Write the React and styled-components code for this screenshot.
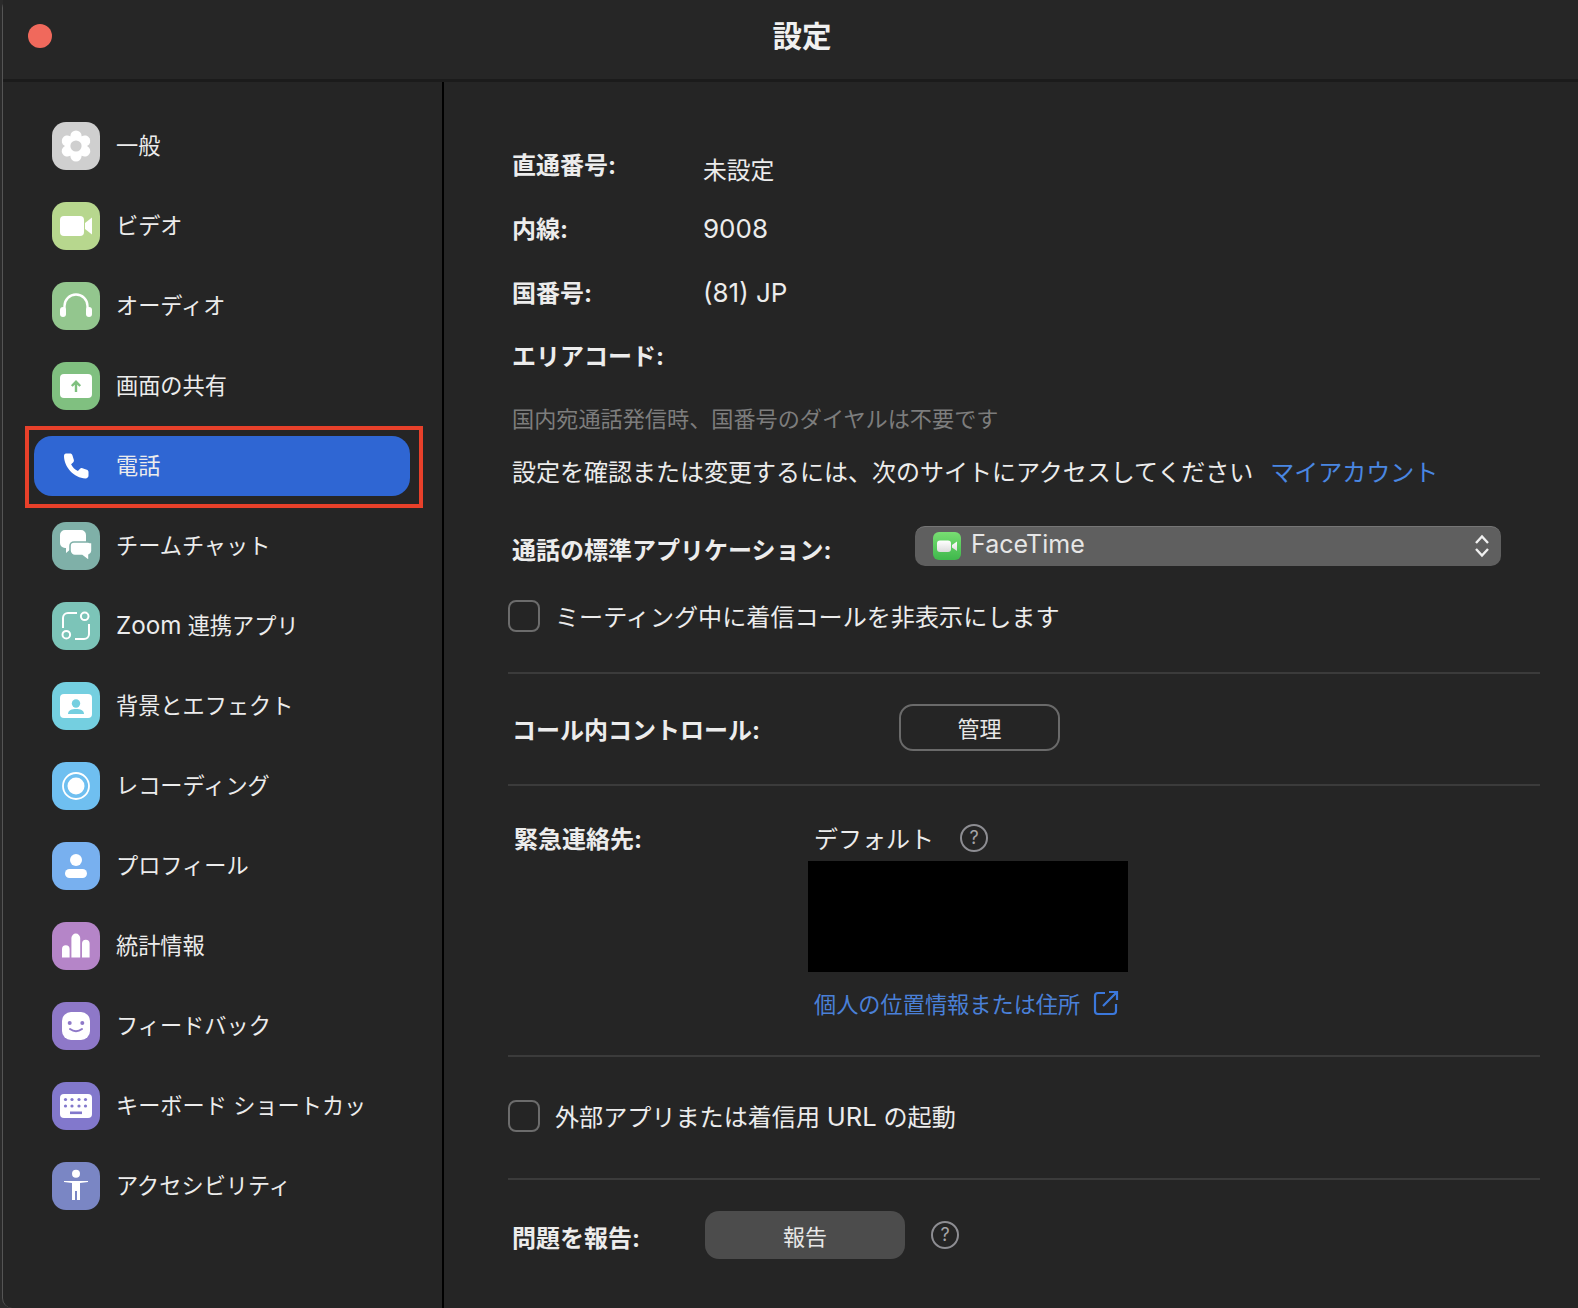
import React from "react";
import styled, { createGlobalStyle } from "styled-components";

const GlobalStyle = createGlobalStyle`
  html, body {
    margin: 0;
    padding: 0;
    background: #2b2b2b;
  }
  body {
    font-family: Inter, "Noto Sans CJK JP", "Liberation Sans", sans-serif;
    color: #ececec;
  }
`;

const Frame = styled.div`
  width: 1578px;
  height: 1308px;
  padding-left: 2px;
  box-sizing: border-box;
  overflow: hidden;
`;

const Win = styled.div`
  height: 100%;
  background: #252525;
  border-left: 1px solid #555555;
  border-radius: 8px 0 0 10px;
  display: flex;
  flex-direction: column;
`;

const TitleBar = styled.div`
  height: 79px;
  flex: none;
  display: flex;
  align-items: center;
  justify-content: center;
  position: relative;
  background: #262626;
  border-bottom: 3px solid #1b1b1b;
`;

const CloseDot = styled.div`
  position: absolute;
  left: 25px;
  top: 24px;
  width: 24px;
  height: 24px;
  border-radius: 50%;
  background: #f0695c;
`;

const Title = styled.div`
  font-size: 29.5px;
  font-weight: 700;
  line-height: 1;
  margin-left: 23px;
  margin-top: -5px;
  color: #f0f0f0;
`;

const Body = styled.div`
  flex: 1;
  display: flex;
  min-height: 0;
`;

const Sidebar = styled.nav`
  width: 441px;
  flex: none;
  padding-top: 24px;
  box-sizing: border-box;
  border-right: 2px solid #000000;
`;

const NavItem = styled.div`
  height: 80px;
  padding-left: 49px;
  display: flex;
  align-items: center;
  gap: 16px;
  font-size: 22.2px;
  color: #ececec;
  position: relative;
  width: 365px;
  white-space: nowrap;
  overflow: ${(p) => (p.$active ? "visible" : "hidden")};
`;

const ActivePill = styled.div`
  position: absolute;
  left: 31px;
  top: 10px;
  width: 376px;
  height: 60px;
  border-radius: 18px;
  background: #2f66d3;
`;

const RedMark = styled.div`
  position: absolute;
  left: 22px;
  top: 0;
  width: 398px;
  height: 82px;
  box-sizing: border-box;
  border: 4px solid #e8402a;
`;

const NavIconBox = styled.div`
  width: 48px;
  height: 48px;
  flex: none;
  border-radius: 14px;
  background: ${(p) => p.$color};
  position: relative;
  svg {
    display: block;
  }
`;

const NavText = styled.span`
  position: relative;
  line-height: 1;
`;

const Latin = styled.span`
  font-size: ${(p) => p.$scale || 1.09}em;
`;

const Main = styled.main`
  flex: 1;
  padding: 50.5px 38px 0 64px;
  min-width: 0;
`;

const Rows = styled.div`
  padding-left: 4px;
`;

const InfoRow = styled.div`
  height: 63.5px;
  display: flex;
  align-items: center;
`;

const Label = styled.div`
  font-size: 24px;
  font-weight: 700;
  width: ${(p) => p.$width || 191}px;
  flex: none;
  white-space: nowrap;
  padding-top: ${(p) => p.$down || 0}px;
  padding-bottom: ${(p) => p.$up || 0}px;
  box-sizing: content-box;
`;

const Value = styled.div`
  font-size: ${(p) => p.$size || 23.8}px;
  padding-top: ${(p) => p.$down || 0}px;
`;

const Note = styled.div`
  font-size: 22.15px;
  line-height: 40px;
  color: #7d7d7d;
  margin-top: 12.5px;
  white-space: nowrap;
`;

const SiteLine = styled.div`
  font-size: 24px;
  line-height: 40px;
  margin-top: 14px;
  white-space: nowrap;
  display: flex;
  gap: 17px;
`;

const BlueLink = styled.span`
  color: #4a87e2;
`;

const AppRow = styled.div`
  display: flex;
  align-items: flex-start;
  margin-top: 32.5px;
  padding-left: 4px;
`;

const SelectBox = styled.div`
  width: 586px;
  height: 40px;
  border-radius: 10px;
  background: #5f5f5f;
  border-top: 1px solid #767676;
  box-sizing: border-box;
  display: flex;
  align-items: center;
  padding: 0 11px 0 18px;
`;

const SelectText = styled.span`
  font-size: 25px;
  margin-left: 10px;
  margin-top: -4px;
  flex: 1;
  color: #e6e6e6;
`;

const CheckRow = styled.label`
  display: flex;
  align-items: center;
  gap: 15px;
  font-size: 24.1px;
  margin-top: ${(p) => p.$top}px;
  height: 32px;
  white-space: nowrap;
`;

const CheckBox = styled.span`
  width: 32px;
  height: 32px;
  flex: none;
  box-sizing: border-box;
  border: 2px solid #6c6c6c;
  border-radius: 8px;
`;

const Rule = styled.div`
  height: 2px;
  background: #3b3b3b;
  margin-top: ${(p) => p.$top}px;
`;

const ControlRow = styled.div`
  display: flex;
  align-items: flex-start;
  margin-top: ${(p) => p.$top}px;
  padding-left: 4px;
`;

const OutlineBtn = styled.button`
  width: 161px;
  height: 47px;
  box-sizing: border-box;
  border: 2px solid #6a6a6a;
  border-radius: 14px;
  background: transparent;
  color: #e8e8e8;
  font-family: inherit;
  font-size: 22px;
  padding: 0;
`;

const FilledBtn = styled.button`
  width: 200px;
  height: 48px;
  border: 0;
  border-radius: 14px;
  background: #4c4c4c;
  color: #e8e8e8;
  font-family: inherit;
  font-size: 22px;
  padding: 0;
`;

const EmergencyRow = styled.div`
  display: flex;
  margin-top: 32px;
  padding-left: 6px;
`;

const EmergencyCol = styled.div`
  display: flex;
  flex-direction: column;
`;

const DefaultLine = styled.div`
  height: 43px;
  box-sizing: border-box;
  padding: 0 0 4px 6px;
  display: flex;
  align-items: center;
  font-size: 24px;
`;

const Blackout = styled.div`
  width: 320px;
  height: 111px;
  background: #000000;
`;

const LinkLine = styled.div`
  display: flex;
  align-items: center;
  gap: 13px;
  padding-left: 6px;
  margin-top: 14px;
  height: 34px;
  font-size: 22.2px;
  color: #4a80d8;
`;

const HelpMark = styled.span`
  width: 28px;
  height: 28px;
  flex: none;
  box-sizing: border-box;
  border: 2px solid #8d8d92;
  border-radius: 50%;
  color: #a4a4a8;
  font-size: 18px;
  line-height: 1;
  display: inline-flex;
  align-items: center;
  justify-content: center;
  margin-left: ${(p) => p.$left}px;
  margin-top: ${(p) => p.$up || 0}px;
`;

const W = "#ffffff";

const GearIcon = () => (
  <svg width="48" height="48" viewBox="0 0 48 48">
    {[0, 60, 120, 180, 240, 300].map((a) => (
      <circle key={a} cx="24" cy="14" r="5.6" fill={W} transform={`rotate(${a} 24 24)`} />
    ))}
    <circle cx="24" cy="24" r="11" fill={W} />
    <circle cx="24" cy="24" r="5.6" fill="#cfcfcf" />
  </svg>
);

const VideoIcon = () => (
  <svg width="48" height="48" viewBox="0 0 48 48">
    <rect x="8" y="14" width="24" height="20" rx="4" fill={W} />
    <path d="M33 21 L40 15.5 V32.5 L33 27 Z" fill={W} />
  </svg>
);

const AudioIcon = () => (
  <svg width="48" height="48" viewBox="0 0 48 48">
    <path d="M12.5 30 V24 a11.5 11.5 0 0 1 23 0 V30" fill="none" stroke={W} strokeWidth="2.4" />
    <rect x="8" y="25" width="6" height="10" rx="3" fill={W} />
    <rect x="34" y="25" width="6" height="10" rx="3" fill={W} />
  </svg>
);

const ShareIcon = () => (
  <svg width="48" height="48" viewBox="0 0 48 48">
    <rect x="8" y="12" width="32" height="24" rx="4" fill={W} />
    <path d="M24 30 V20 M19.8 24 L24 19.8 L28.2 24" fill="none" stroke="#7fc07f" strokeWidth="2.4" />
  </svg>
);

const PhoneIcon = () => (
  <svg width="48" height="48" viewBox="0 0 48 48">
    <path
      d="M14 11.5 h4 c1.2 0 2 .6 2.4 1.8 l1.4 4.5 c.3 1 .1 1.9 -.7 2.6 l-2 1.8 c1.3 3 3.7 5.3 6.8 6.7 l1.9 -2 c.7 -.7 1.6 -1 2.6 -.7 l4.4 1.5 c1.1 .4 1.7 1.2 1.7 2.4 v3.5 c0 1.6 -1.2 2.9 -3 2.9 C22 36 12 25 12 14 c0 -1.5 .8 -2.5 2 -2.5 Z"
      fill={W}
    />
  </svg>
);

const ChatIcon = () => (
  <svg width="48" height="48" viewBox="0 0 48 48">
    <path d="M13 8 H29 a5 5 0 0 1 5 5 V21 a5 5 0 0 1 -5 5 H20 L14 31 V26 H13 a5 5 0 0 1 -5 -5 V13 a5 5 0 0 1 5 -5 Z" fill={W} />
    <path d="M22 20 H35 V19 Q38 22 40 19 V29 a5 5 0 0 1 -3 4 V39 L30 33.5 H23 a5 5 0 0 1 -5 -5 V24 a4 4 0 0 1 4 -4 Z" fill={W} stroke="#7fb0a8" strokeWidth="1.6" />
  </svg>
);

const AppsIcon = () => (
  <svg width="48" height="48" viewBox="0 0 48 48" fill="none" stroke={W} strokeWidth="2">
    <path d="M11 26 V16 a5 5 0 0 1 5 -5 H25" />
    <path d="M37 22 V32 a5 5 0 0 1 -5 5 H23" />
    <circle cx="32.7" cy="14.3" r="3.8" />
    <circle cx="14.3" cy="32.7" r="3.8" />
  </svg>
);

const BackgroundIcon = () => (
  <svg width="48" height="48" viewBox="0 0 48 48">
    <rect x="8" y="12" width="32" height="24" rx="4" fill={W} />
    <circle cx="24" cy="21.5" r="4.2" fill="#74cfe0" />
    <path d="M16 32 C16 28 20 27 24 27 C28 27 32 28 32 32 Z" fill="#74cfe0" />
  </svg>
);

const RecordIcon = () => (
  <svg width="48" height="48" viewBox="0 0 48 48">
    <circle cx="24" cy="24" r="13" fill="none" stroke={W} strokeWidth="1.8" />
    <circle cx="24" cy="24" r="8.5" fill={W} />
  </svg>
);

const ProfileIcon = () => (
  <svg width="48" height="48" viewBox="0 0 48 48">
    <circle cx="24" cy="18" r="6" fill={W} />
    <rect x="13" y="27" width="22" height="9" rx="4.5" fill={W} />
  </svg>
);

const StatsIcon = () => (
  <svg width="48" height="48" viewBox="0 0 48 48">
    <path d="M10 35.5 V27 a3.8 3.8 0 0 1 7.6 0 V35.5 Z" fill={W} />
    <path d="M19.4 35.5 V16 a4.4 4.4 0 0 1 8.8 0 V35.5 Z" fill={W} />
    <path d="M30 35.5 V21.5 a3.8 3.8 0 0 1 7.6 0 V35.5 Z" fill={W} />
  </svg>
);

const FeedbackIcon = () => (
  <svg width="48" height="48" viewBox="0 0 48 48">
    <rect x="10" y="10" width="28" height="28" rx="9" fill={W} />
    <circle cx="17.7" cy="21" r="2" fill="#8e78c8" />
    <circle cx="30.3" cy="21" r="2" fill="#8e78c8" />
    <path d="M18 27 Q24 31.5 30 27" fill="none" stroke="#8e78c8" strokeWidth="2" strokeLinecap="round" />
  </svg>
);

const KeyboardIcon = () => (
  <svg width="48" height="48" viewBox="0 0 48 48">
    <rect x="8" y="12" width="32" height="24" rx="4" fill={W} />
    {[17.5, 24].map((y) =>
      [13.5, 20, 27, 33.5].map((x) => (
        <circle key={`${x}-${y}`} cx={x} cy={y} r="1.6" fill="#8278cc" />
      ))
    )}
    <rect x="18" y="29.5" width="12" height="2.6" fill="#8278cc" />
  </svg>
);

const AccessIcon = () => (
  <svg width="48" height="48" viewBox="0 0 48 48">
    <circle cx="24" cy="11.7" r="4" fill={W} />
    <path d="M12 19 H36 V20 L28 21 V38 H25 V29 H23 V38 H20 V21 L12 20 Z" fill={W} />
  </svg>
);

const FaceTimeIcon = () => (
  <svg width="28" height="28" viewBox="0 0 28 28">
    <defs>
      <linearGradient id="ft" x1="0" y1="0" x2="0" y2="1">
        <stop offset="0" stopColor="#78de72" />
        <stop offset="1" stopColor="#3fb84c" />
      </linearGradient>
      <linearGradient id="ftw" x1="0" y1="0" x2="0" y2="1">
        <stop offset="0" stopColor="#ffffff" />
        <stop offset="1" stopColor="#dcdcdc" />
      </linearGradient>
    </defs>
    <rect width="28" height="28" rx="6" fill="url(#ft)" />
    <rect x="4" y="8.5" width="14" height="11.5" rx="3" fill="url(#ftw)" />
    <path d="M19 13 L24 9.5 V19 L19 15.5 Z" fill="url(#ftw)" />
  </svg>
);

const Chevrons = () => (
  <svg width="16" height="24" viewBox="0 0 16 24" fill="none" stroke="#f0f0f0" strokeWidth="2.4">
    <path d="M2 9 L8 2.5 L14 9" />
    <path d="M2 15 L8 21.5 L14 15" />
  </svg>
);

const ExternalIcon = () => (
  <svg width="26" height="26" viewBox="0 0 26 26" fill="none" stroke="#3b78dc" strokeWidth="2.2">
    <path d="M12 3 H5 a3 3 0 0 0 -3 3 V21 a3 3 0 0 0 3 3 H20 a3 3 0 0 0 3 -3 V14" />
    <path d="M10 16 L24 2 M16 2 H24 V10" />
  </svg>
);

const NAV = [
  { id: "general", label: "一般", color: "#cfcfcf", Icon: GearIcon },
  { id: "video", label: "ビデオ", color: "#b7d78e", Icon: VideoIcon },
  { id: "audio", label: "オーディオ", color: "#93c68e", Icon: AudioIcon },
  { id: "share", label: "画面の共有", color: "#80c080", Icon: ShareIcon },
  { id: "phone", label: "電話", color: "transparent", Icon: PhoneIcon, active: true },
  { id: "chat", label: "チームチャット", color: "#7fb0a8", Icon: ChatIcon },
  {
    id: "apps",
    label: (
      <>
        <Latin>Zoom</Latin> 連携アプリ
      </>
    ),
    color: "#7cc4b8",
    Icon: AppsIcon,
  },
  { id: "bg", label: "背景とエフェクト", color: "#74cfe0", Icon: BackgroundIcon },
  { id: "rec", label: "レコーディング", color: "#6fbff0", Icon: RecordIcon },
  { id: "profile", label: "プロフィール", color: "#78b0ef", Icon: ProfileIcon },
  { id: "stats", label: "統計情報", color: "#b585c8", Icon: StatsIcon },
  { id: "feedback", label: "フィードバック", color: "#8e78c8", Icon: FeedbackIcon },
  { id: "keys", label: "キーボード ショートカッ", color: "#8278cc", Icon: KeyboardIcon },
  { id: "a11y", label: "アクセシビリティ", color: "#7a86c4", Icon: AccessIcon },
];

export default function App() {
  return (
    <>
      <GlobalStyle />
      <Frame>
        <Win>
          <TitleBar>
            <CloseDot />
            <Title>設定</Title>
          </TitleBar>
          <Body>
            <Sidebar>
              {NAV.map(({ id, label, color, Icon, active }) => (
                <NavItem key={id} $active={active}>
                  {active && <ActivePill />}
                  {active && <RedMark />}
                  <NavIconBox $color={color}>
                    <Icon />
                  </NavIconBox>
                  <NavText>{label}</NavText>
                </NavItem>
              ))}
            </Sidebar>
            <Main>
              <Rows>
                <InfoRow>
                  <Label $up={2}>直通番号:</Label>
                  <Value $down={9}>未設定</Value>
                </InfoRow>
                <InfoRow>
                  <Label>内線:</Label>
                  <Value $size={26} $down={2}>9008</Value>
                </InfoRow>
                <InfoRow>
                  <Label>国番号:</Label>
                  <Value $size={26} $down={2}>(81) JP</Value>
                </InfoRow>
                <InfoRow>
                  <Label>エリアコード:</Label>
                </InfoRow>
                <Note>国内宛通話発信時、国番号のダイヤルは不要です</Note>
                <SiteLine>
                  <span>設定を確認または変更するには、次のサイトにアクセスしてください</span>
                  <BlueLink>マイアカウント</BlueLink>
                </SiteLine>
              </Rows>
              <AppRow>
                <Label $width={403} $down={5}>
                  通話の標準アプリケーション:
                </Label>
                <SelectBox>
                  <FaceTimeIcon />
                  <SelectText>FaceTime</SelectText>
                  <Chevrons />
                </SelectBox>
              </AppRow>
              <CheckRow $top={34}>
                <CheckBox />
                ミーティング中に着信コールを非表示にします
              </CheckRow>
              <Rule $top={40} />
              <ControlRow $top={30}>
                <Label $width={387} $down={7}>
                  コール内コントロール:
                </Label>
                <OutlineBtn>管理</OutlineBtn>
              </ControlRow>
              <Rule $top={33} />
              <EmergencyRow>
                <Label $width={294} $down={2}>
                  緊急連絡先:
                </Label>
                <EmergencyCol>
                  <DefaultLine>
                    デフォルト
                    <HelpMark $left={26} $up={2}>?</HelpMark>
                  </DefaultLine>
                  <Blackout />
                  <LinkLine>
                    個人の位置情報または住所
                    <ExternalIcon />
                  </LinkLine>
                </EmergencyCol>
              </EmergencyRow>
              <Rule $top={35} />
              <CheckRow $top={43}>
                <CheckBox />
                <span>
                  外部アプリまたは着信用 <Latin $scale={1.06}>URL</Latin> の起動
                </span>
              </CheckRow>
              <Rule $top={46} />
              <ControlRow $top={31}>
                <Label $width={193} $down={8}>
                  問題を報告:
                </Label>
                <FilledBtn>報告</FilledBtn>
                <HelpMark $left={26} $up={10}>?</HelpMark>
              </ControlRow>
            </Main>
          </Body>
        </Win>
      </Frame>
    </>
  );
}
